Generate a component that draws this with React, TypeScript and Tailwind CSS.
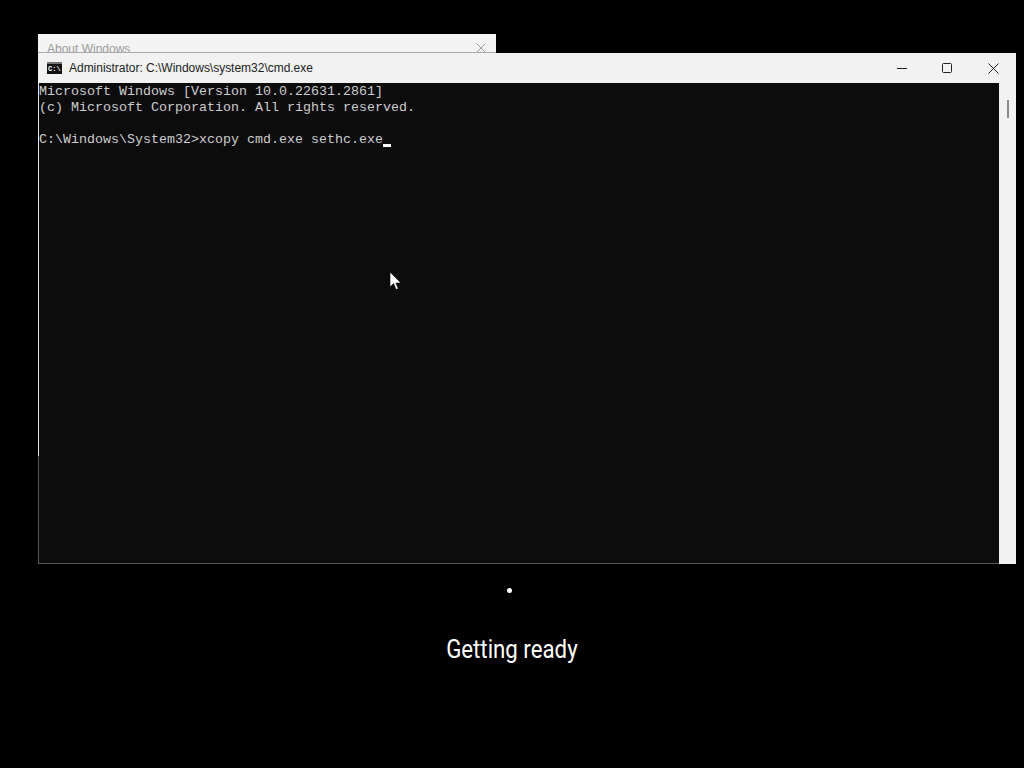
const CONSOLE_LINES = [
  'Microsoft Windows [Version 10.0.22631.2861]',
  '(c) Microsoft Corporation. All rights reserved.',
  '',
]

function CmdIcon() {
  return (
    <div className="w-[15px] h-[12px] bg-[#111] border-t-2 border-[#777] flex items-center pl-[1px] mr-[7px]">
      <span className="text-[7px] leading-none text-white font-bold font-['Liberation_Mono',monospace]">C:\</span>
    </div>
  )
}

function WindowButtons() {
  return (
    <div className="flex items-center ml-auto text-[#222]">
      <div className="w-[45px] h-[30px] flex items-center justify-center">
        <svg width="10" height="10" viewBox="0 0 10 10"><path d="M0 5.5h10" stroke="currentColor" fill="none" /></svg>
      </div>
      <div className="w-[45px] h-[30px] flex items-center justify-center">
        <svg width="10" height="10" viewBox="0 0 10 10"><rect x="0.5" y="0.5" width="9" height="9" rx="1" stroke="currentColor" fill="none" /></svg>
      </div>
      <div className="w-[47px] h-[30px] pl-px flex items-center justify-center">
        <svg width="11" height="11" viewBox="0 0 11 11"><path d="M0.5 0.5l10 10M10.5 0.5l-10 10" stroke="currentColor" fill="none" /></svg>
      </div>
    </div>
  )
}

export default function App() {
  return (
    <div className="w-[1024px] h-[768px] bg-black overflow-hidden flex flex-col items-start pt-[34px] pl-[38px] relative font-['Liberation_Sans',sans-serif]">
      {/* About Windows, mostly hidden behind cmd */}
      <div className="w-[458px] h-[19px] bg-[#f4f4f4] border-b border-[#aaa] overflow-hidden flex items-start pl-[9px] pr-[10px] pt-[7px] shrink-0">
        <span className="text-[12px] leading-[17px] text-[#9a9a9a]">About Windows</span>
        <svg className="ml-auto mt-[2px]" width="10" height="10" viewBox="0 0 10 10">
          <path d="M0.5 0.5l9 9M9.5 0.5l-9 9" stroke="#a0a0a0" fill="none" />
        </svg>
      </div>

      {/* cmd window */}
      <div className="w-[978px] h-[511px] flex flex-col shrink-0">
        <div className="h-[30px] bg-[#f2f2f2] flex items-center pl-[9px] shrink-0">
          <CmdIcon />
          <span className="text-[12px] tracking-[-0.02px] text-[#222]">Administrator: C:\Windows\system32\cmd.exe</span>
          <WindowButtons />
        </div>
        <div className="flex flex-1 min-h-0">
          <div className="w-px flex flex-col shrink-0">
            <div className="h-[373px] bg-[#e8e8e8]" />
            <div className="flex-1 bg-[#555]" />
          </div>
          <div className="w-[960px] pt-px bg-[#0c0c0c] border-b border-[#555] font-['Liberation_Mono',monospace] text-[13.33px] leading-[16px] text-[#cccccc] whitespace-pre">
            {CONSOLE_LINES.map((line, i) => (
              <div key={i} className="h-4">{line}</div>
            ))}
            <div className="h-4 flex">
              <span>{'C:\\Windows\\System32>xcopy cmd.exe sethc.exe'}</span>
              <span className="w-2 h-[3px] bg-white mt-[12px]" />
            </div>
          </div>
          <div className="w-[17px] bg-[#f1f1f1] flex justify-center pt-[17px]">
            <div className="w-[2px] h-[18px] bg-[#8a8a8a]" />
          </div>
        </div>
      </div>

      {/* Getting ready */}
      <div className="w-[1024px] -ml-[38px] flex flex-col items-center">
        <div className="w-[5px] h-[5px] rounded-full bg-white mt-[24px] -translate-x-[3px]" />
        <div className="text-center text-[25px] leading-[34px] mt-[40px] text-white font-['Roboto',sans-serif] scale-x-[0.89]">
          Getting ready
        </div>
      </div>

      {/* mouse pointer */}
      <svg className="absolute left-[389px] top-[271px]" width="13" height="21" viewBox="0 0 13 21">
        <path d="M1 1v15l3.6-3.4 2.4 6 2.3-1-2.4-5.6h5z" fill="#fff" stroke="#000" strokeWidth="0.6" />
      </svg>
    </div>
  )
}
